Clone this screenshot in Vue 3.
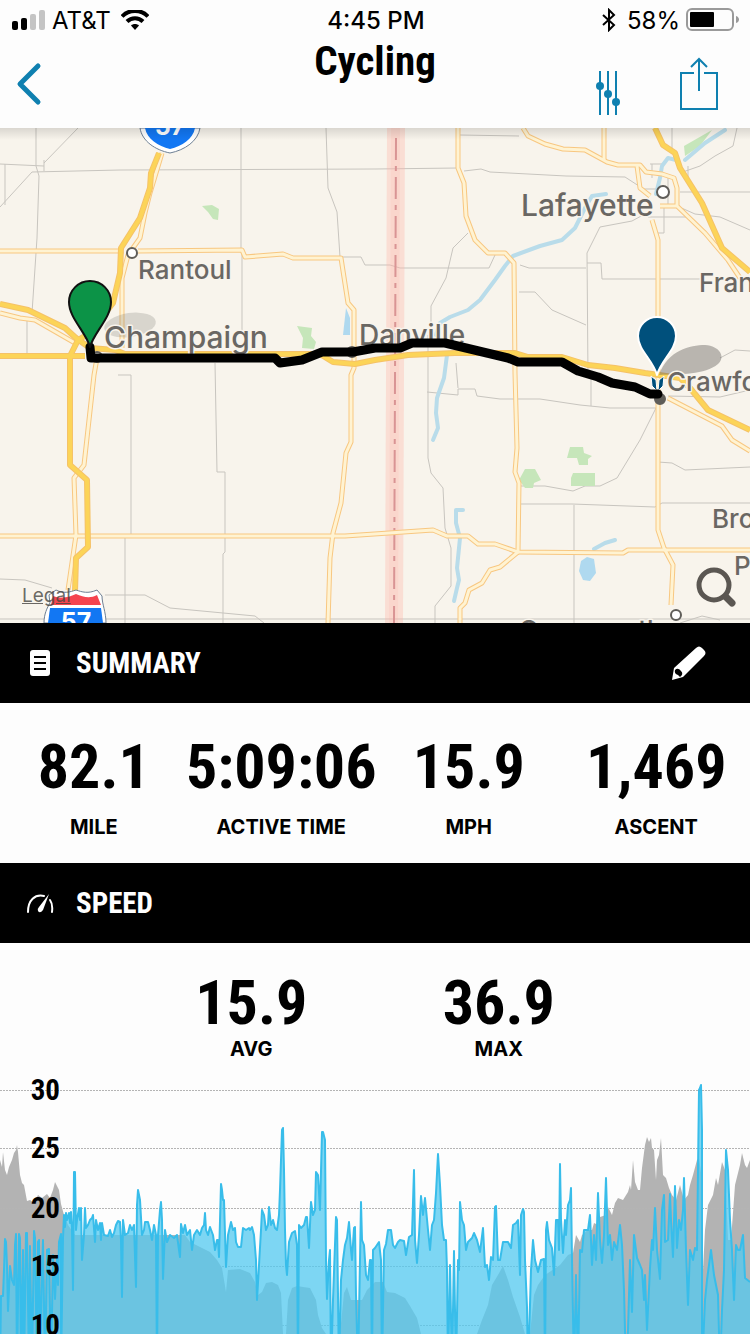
<script setup>
import { computed } from 'vue'

const summary = [
  { value: '82.1', label: 'MILE' },
  { value: '5:09:06', label: 'ACTIVE TIME' },
  { value: '15.9', label: 'MPH' },
  { value: '1,469', label: 'ASCENT' },
]

const speed = [
  { value: '15.9', label: 'AVG' },
  { value: '36.9', label: 'MAX' },
]

// Map geometry
const lanes = [
  'M36 0V38L39 48L37 110L32 185M78 0L44 35M44 32V43M0 36L44 38M5 36V77M0 79L32 44L120 42L375 41L458 40',
  'M241 0V121M242 126V205M326 0L328 60L337 84L340 129H361L365 137H390L400 140H489L495 127M27 192V225',
  'M460 7L519 8M464 43L481 41L490 44L566 48L625 49L642 60M468 105L453 120L446 150L431 178V205',
  'M520 137L529 140H586M519 164H535L552 182L586 197M643 87L632 93L600 99L587 125L588 250M587 135H601L602 151H700',
  'M680 64H750M677 78L695 86L720 89L750 102M737 0L733 18L715 28L700 38L680 45M688 38V50M650 36H664M652 36V50M672 0V20',
  'M648 89H690M664 80V105M656 105H664M644 61H662M668 48V80M428 207V330L431 345L443 360L445 400L451 420V458L435 478V495',
  'M427 264L458 267V261H475L477 268L500 271H540L580 277L610 280H656L640 312L617 350L600 358H585L573 363L545 358H520',
  'M591 247V278M456 235L458 260M520 376H572L655 379L662 375H750M574 377V495M658 334L672 335L685 342L750 339',
  'M668 268L720 269L750 262M720 230L735 222L750 223M131 247V407M118 247H131M215 235L217 344H225V424L223 426V495M125 408V495',
  'M0 451L25 452L52 460M105 467H145L170 480L255 488L264 495M0 491H750M680 495L702 488L720 492',
]

const roads = [
  'M0 123H124M138 123L242 122L245 129L283 126L293 130H341L348 175L354 182L354 240L351 247V314L346 325L341 375L333 405L330 430L328 495',
  'M162 25L150 65L145 85L140 110L128 127L122 150V220M0 185L20 190L35 192L75 215',
  'M97 230L94 247L84 337L74 350L76 407L68 462',
  'M0 408H345L433 402L447 408H468L478 416H495L518 424L623 425L628 422H750',
  'M518 424L500 439L490 442L482 455L469 462L465 475L460 480V495',
  'M458 0V40L464 55L466 88L475 112L488 125H505L514 135L515 245L517 320L515 344L519 355L518 424',
  'M523 0L528 8L545 16L563 21L585 22L607 34L618 37H640L646 44L662 46L674 50L677 60V78L705 105L728 132L740 150M660 78H677',
  'M604 0V33M637 38L640 60L650 68M652 92L658 112V402L664 420L673 437L671 477M668 270L722 298L732 312L750 323',
]

const highways = [
  'M159 25L151 45L150 60L140 90L121 120L120 145L113 175L90 205L78 212L70 228V337L87 352L88 419L76 430L75 464',
  'M0 176L28 182L65 200L76 210L90 220L115 222L125 226H320L333 234L355 236L375 232L408 227L455 225H515L528 229H562L588 237L615 240L645 245L680 250L690 260L708 282L750 302',
  'M0 228H85',
  'M655 0L663 17L675 25L680 40L702 75L722 120L750 144',
]

const rivers = [
  'M606 66L592 68L585 80L575 100L562 112L540 118L513 128L505 138L495 152L480 172L468 182L450 189L440 195L436 207',
  'M447 227L444 250L437 270L436 285L438 300L433 312',
  'M463 382H456V395L460 410L457 440L459 452L457 460L454 473',
  'M725 2L705 15L685 32M676 32L668 30L662 38L660 50L656 66M594 421L605 415L615 412',
]

const route =
  'M90 219L91 230H275L280 235L302 232L322 224L353 224L375 220H400L412 215H445L508 230L518 234H562L578 243L598 249L612 255L635 259L650 266H658'

const places = [
  { name: 'Rantoul', x: 138, y: 151, size: 26 },
  { name: 'Champaign', x: 104, y: 220, size: 30 },
  { name: 'Danville', x: 359, y: 217, size: 28 },
  { name: 'Lafayette', x: 521, y: 88, size: 30 },
  { name: 'Frankfort', x: 699, y: 164, size: 26 },
  { name: 'Crawfordsville', x: 667, y: 263, size: 26 },
  { name: 'Brownsburg', x: 712, y: 400, size: 26 },
  { name: 'Plainfield', x: 734, y: 447, size: 26 },
  { name: 'Greencastle', x: 519, y: 511, size: 26 },
]

// Chart data
const ticks = [
  { value: 30, y: 20 },
  { value: 25, y: 78 },
  { value: 20, y: 138 },
  { value: 15, y: 196 },
  { value: 10, y: 255 },
]

const elevation =
  '0,90 2,97 3,82 5,100 7,105 9,97 12,90 14,83 16,80 17,75 18,82 20,105 22,113 24,115 27,131 30,130 34,133 38,125 42,128 47,124 50,128 53,120 55,112 57,116 59,120 61,134 64,145 68,155 75,165 185,165 190,172 200,177 210,182 217,190 222,198 226,222 228,200 240,199 250,203 255,212 258,225 262,222 266,213 272,212 278,215 281,223 283,264 286,264 288,230 292,218 297,216 303,217 310,218 316,230 318,245 322,258 326,264 340,264 344,223 347,217 351,230 362,230 367,220 375,212 383,212 387,222 395,223 405,228 410,236 417,248 421,264 477,264 482,250 488,235 492,215 498,205 503,196 508,210 513,227 520,247 525,264 530,264 534,225 538,215 545,205 560,195 568,185 573,183 576,165 580,172 582,165 588,160 592,160 594,153 598,155 600,147 606,145 608,137 612,145 615,133 618,128 623,130 628,122 630,115 631,120 633,90 635,112 638,120 640,120 642,98 645,75 647,67 649,72 651,68 652,78 654,80 656,110 657,90 659,85 661,68 663,105 666,108 669,118 672,125 676,130 680,115 684,130 688,125 690,115 693,105 697,90 699,88 702,110 703,200 705,160 708,135 713,125 716,108 718,115 722,92 725,100 728,170 731,170 735,115 740,95 742,83 745,95 747,98 750,90'

const pace =
  '0,300 1,226 3,226 4,200 5,169 6,172 7,196 8,241 10,196 12,210 14,215 15,175 16,164 17,300 19,164 20,168 21,300 23,180 24,300 26,163 27,163 28,230 29,300 30,176 32,300 34,161 35,168 37,300 38,172 39,170 40,300 42,200 43,170 45,300 47,180 49,179 51,300 53,185 55,229 57,187 58,215 59,172 61,164 61,300 63,168 64,145 65,157 66,143 67,150 69,143 70,153 71,142 72,160 73,220 74,102 75,102 76,160 77,150 79,138 80,150 81,138 82,190 84,165 85,138 86,158 88,155 90,150 92,148 93,145 95,172 96,150 98,160 100,153 101,170 102,153 104,165 108,166 110,160 112,167 114,163 116,155 118,151 120,152 121,170 122,227 123,150 125,165 128,163 130,155 132,160 134,155 136,217 137,135 138,120 140,130 142,165 144,160 145,152 148,152 150,160 152,170 154,155 156,165 157,300 158,165 160,140 161,132 162,150 163,209 165,160 167,172 170,165 174,168 177,165 179,180 180,187 181,154 183,163 185,155 187,165 190,160 192,180 194,165 197,160 200,165 202,158 204,155 205,143 206,160 208,165 210,157 213,165 215,180 217,170 218,170 219,187 221,114 222,120 223,130 224,130 226,197 228,165 231,152 233,160 235,158 236,172 238,177 241,177 243,158 246,160 249,158 250,160 252,157 254,165 256,190 257,230 259,195 261,160 262,140 264,145 266,160 268,155 269,137 271,155 273,150 275,158 277,160 279,145 280,120 282,60 283,58 284,100 285,160 286,195 287,205 289,172 292,163 295,161 297,175 298,300 299,155 301,158 304,155 306,147 307,147 309,178 311,132 313,145 315,140 316,102 318,105 320,140 322,62 323,62 325,70 326,190 327,229 329,190 330,180 331,300 333,230 336,147 337,150 339,300 341,210 343,190 345,175 347,168 349,152 351,180 352,190 354,158 355,157 356,225 358,300 360,190 361,132 362,170 364,175 366,205 368,210 370,190 371,190 372,300 373,180 375,178 377,175 379,172 381,190 382,300 384,180 386,174 388,160 391,160 393,175 395,178 398,172 400,170 404,171 406,185 409,167 412,165 414,100 415,170 417,193 419,165 421,126 423,145 425,128 428,160 430,180 432,155 434,150 436,123 438,84 440,115 442,155 444,170 446,170 447,200 448,300 450,195 452,300 454,181 456,300 458,190 459,200 460,132 462,150 464,155 466,180 468,172 472,168 474,163 477,170 480,182 483,158 485,197 487,195 489,210 491,187 493,190 495,137 496,136 498,190 500,190 503,172 508,172 511,178 513,155 516,153 518,150 520,205 521,145 523,139 524,142 525,190 527,237 528,300 530,235 531,200 533,170 535,190 538,202 541,190 544,189 545,300 546,160 547,152 549,170 552,178 554,205 556,150 558,150 559,180 560,94 561,150 563,183 565,150 566,165 568,135 570,130 571,118 572,190 574,300 576,205 578,300 580,180 582,182 584,160 588,160 590,145 592,195 594,165 596,190 598,123 600,170 602,193 604,165 606,108 608,175 610,165 612,190 614,172 617,180 620,155 622,175 624,220 626,300 628,260 630,190 632,242 634,165 637,188 640,195 642,200 644,230 645,205 647,260 650,198 652,170 653,180 655,138 657,180 660,209 662,140 664,125 665,172 668,170 670,124 671,150 673,187 675,116 677,178 679,150 681,160 683,140 684,108 686,180 688,235 690,180 693,190 695,178 697,180 699,20 700,18 701,15 702,60 702,300 705,230 707,210 711,180 714,205 718,225 720,300 722,240 724,200 726,80 728,100 730,150 732,180 734,230 736,175 738,180 740,180 743,165 745,208 750,212'

const elevationArea = computed(() => `0,264 ${elevation} 750,264`)
const paceArea = computed(() => `${pace} 750,300`)
</script>

<template>
  <div class="screen">
    <!-- Status bar -->
    <div class="status-bar">
      <div class="carrier">
        <svg class="signal" viewBox="0 0 34 20" aria-hidden="true">
          <rect x="0" y="11" width="6" height="9" rx="2" />
          <rect x="9" y="8" width="6" height="12" rx="2" />
          <rect class="off" x="18" y="4" width="6" height="16" rx="2" />
          <rect class="off" x="27" y="0" width="6" height="20" rx="2" />
        </svg>
        <span>AT&amp;T</span>
        <svg class="wifi" viewBox="0 0 28 20" aria-hidden="true">
          <path d="M1 6.500C8-1 20-1 27 6.500" />
          <path d="M6 11.500C10.500 7 17.500 7 22 11.500" />
          <path class="dot" d="M10 15.500C12 13.500 16 13.500 18 15.500L14 20Z" />
        </svg>
      </div>
      <span class="clock">4:45 PM</span>
      <div class="power">
        <svg class="bluetooth" viewBox="0 0 16 24" aria-hidden="true">
          <path d="M2 7L13 17L8 22V2L13 7L2 17" />
        </svg>
        <span>58%</span>
        <svg class="battery" viewBox="0 0 54 24" aria-hidden="true">
          <rect class="shell" x="1" y="1" width="46" height="21" rx="5" />
          <rect x="4" y="4" width="24" height="15" rx="1" />
          <path class="cap" d="M50 8C54 9 54 14 50 15Z" />
        </svg>
      </div>
    </div>

    <!-- Navigation -->
    <header class="nav">
      <button class="icon-button back" type="button" aria-label="Back">
        <svg viewBox="0 0 26 44"><path d="M22 4L4 22L22 40" /></svg>
      </button>
      <h1>Cycling</h1>
      <div class="actions">
        <button class="icon-button filters" type="button" aria-label="Adjust">
          <svg viewBox="0 0 26 46">
            <path d="M5 1V45M13 1V45M21 1V45" />
            <circle cx="5" cy="16" r="4" />
            <circle cx="13" cy="24" r="4" />
            <circle cx="21" cy="32" r="4" />
          </svg>
        </button>
        <button class="icon-button share" type="button" aria-label="Share">
          <svg viewBox="0 0 40 54">
            <path d="M15 16H2V52H38V16H25M20 34V2M12 10L20 2L28 10" />
          </svg>
        </button>
      </div>
    </header>

    <!-- Map -->
    <section class="map" aria-label="Route map">
      <svg class="map-canvas" viewBox="0 0 750 495">
        <defs>
          <linearGradient id="edge" x1="0" y1="0" x2="0" y2="1">
            <stop offset="0" stop-color="#000" stop-opacity="0.12" />
            <stop offset="1" stop-color="#000" stop-opacity="0" />
          </linearGradient>
        </defs>

        <path v-for="d in lanes" :key="d" class="lane" :d="d" />

        <g class="park">
          <path d="M202 78L212 77L219 81L218 92L213 91L208 84Z" />
          <path d="M297 198L312 200L311 208L316 214L314 221L302 220L303 210Z" />
          <path d="M570 319L583 319L584 325L592 328L588 331V337H579L577 330H567Z" />
          <path d="M573 345H595V358H571V350Z" />
          <path d="M525 341H535L541 352L534 355L533 360H525L519 352Z" />
          <path d="M684 18L712 2L700 18L685 28Z" />
        </g>

        <path v-for="d in rivers" :key="d" class="river" :d="d" />
        <path class="lake" d="M581 433L587 429L594 431L596 445L590 453L583 452L579 443Z" />
        <path class="lake" d="M346 180L350 190V207H343Z" />

        <path class="border-band" d="M387 0H405L403 495H385Z" />
        <path class="border-halo" d="M391 0H400L398 495H389Z" />
        <path class="border-line" d="M396 10L394 495" />

        <path v-for="d in roads" :key="d" class="road-edge" :d="d" />
        <path v-for="d in roads" :key="d" class="road" :d="d" />
        <path v-for="d in highways" :key="d" class="highway-edge" :d="d" />
        <path v-for="d in highways" :key="d" class="highway" :d="d" />

        <!-- Interstate shields -->
        <g class="shield">
          <path class="plate" d="M140 0C142 13 155 22 170 25C185 22 198 13 200 0Z" />
          <path class="blue" d="M145 0C147 11 158 18 170 21C182 18 193 11 195 0Z" />
          <text x="170" y="7" text-anchor="middle">57</text>
          <path class="plate" d="M44 495C44 486 47 480 50 475L49 467L56 462C64 466 70 464 76 462C82 464 88 466 97 462L102 468C102 476 106 484 106 495Z" />
          <path class="red" d="M53 468C62 471 70 469 76 466C83 469 90 471 97 467L101 477H51Z" />
          <path class="blue" d="M50 480H101L103 495H48Z" />
          <text x="76" y="503" text-anchor="middle">57</text>
        </g>

        <ellipse class="shadow light" cx="130" cy="197" rx="26" ry="12" transform="rotate(-8 130 197)" />
        <path class="shadow" d="M659 247C668 222 690 217 705 217C720 218 726 229 718 236C705 247 680 246 659 247Z" />

        <g class="town">
          <circle cx="132" cy="125" r="5" />
          <circle cx="97" cy="229" r="5" />
          <circle cx="352" cy="224" r="5" />
          <circle cx="663" cy="64" r="6" />
          <circle class="end" cx="660" cy="271" r="5" />
          <circle cx="676" cy="487" r="5" />
        </g>
        <text
          v-for="place in places"
          :key="place.name"
          class="place"
          :x="place.x"
          :y="place.y"
          :font-size="place.size"
        >{{ place.name }}</text>

        <path class="dart" d="M651 248L656 252L657 263L652 258ZM664 248L659 252L658 263L663 258Z" />
        <path class="route" :d="route" />
        <path class="pin start" d="M90 219C86 204 69 190 69 174A21 21 0 0 1 111 174C111 190 94 204 90 219Z" />
        <path class="pin finish" d="M657 247C653 232 638 222 638 208A19 19 0 0 1 676 208C676 222 661 232 657 247Z" />

        <rect width="750" height="12" fill="url(#edge)" />
      </svg>
      <a class="legal" href="#">Legal</a>
      <button class="icon-button search" type="button" aria-label="Search map">
        <svg viewBox="0 0 42 42">
          <circle cx="19" cy="19" r="15" />
          <path class="handle" d="M31 31L37 37" />
        </svg>
      </button>
    </section>

    <!-- Summary -->
    <section>
      <div class="bar">
        <svg class="bar-icon" viewBox="0 0 28 28" aria-hidden="true">
          <rect x="4" y="1" width="20" height="26" rx="3" />
          <path class="cut" d="M8 8H20M8 14H20M8 20H20" />
        </svg>
        <h2>SUMMARY</h2>
        <button class="icon-button edit" type="button" aria-label="Edit summary">
          <svg viewBox="0 0 36 36">
            <path d="M3 23L25 3Q28 0 31 3L33 5Q36 8 33 11L12 32L1 35Z" />
            <path class="nib" d="M4 25Q7 22 10 26Q13 29 9 32L7 30Q3 29 4 25Z" />
          </svg>
        </button>
      </div>
      <div class="stats summary">
        <div v-for="item in summary" :key="item.label" class="stat">
          <span class="value">{{ item.value }}</span>
          <span class="label">{{ item.label }}</span>
        </div>
      </div>
    </section>

    <!-- Speed -->
    <section>
      <div class="bar">
        <svg class="bar-icon" viewBox="0 0 28 28" aria-hidden="true">
          <path class="dial" d="M2 23C2 11 9 5 18 7M24 11Q27 15 26 23" />
          <path d="M23 5L17 21Q14 25 12 22Q11 20 13 18Z" />
        </svg>
        <h2>SPEED</h2>
      </div>
      <div class="stats speed">
        <div v-for="item in speed" :key="item.label" class="stat">
          <span class="value">{{ item.value }}</span>
          <span class="label">{{ item.label }}</span>
        </div>
      </div>
      <svg class="chart" viewBox="0 0 750 264" role="img" aria-label="Speed over elevation">
        <polygon class="elevation" :points="elevationArea" />
        <path v-for="tick in ticks" :key="tick.value" class="grid-line" :d="`M0 ${tick.y}.5H750`" />
        <polygon class="pace-area" :points="paceArea" />
        <polyline class="pace-line" :points="pace" />
        <text
          v-for="tick in ticks"
          :key="tick.value"
          class="tick"
          x="60"
          :y="tick.y + 10"
          text-anchor="end"
        >{{ tick.value }}</text>
      </svg>
    </section>
  </div>
</template>

<style>
body {
  background: #fdfdfd;
}
</style>

<style scoped>
.screen {
  overflow: hidden;
  background: #fdfdfd;
  color: #000;
  font-family: Inter, "Liberation Sans", sans-serif;
}

svg {
  display: block;
}

/* Status bar */
.status-bar {
  display: grid;
  grid-template-columns: 1fr auto 1fr;
  align-items: center;
  height: 40px;
  padding: 0 10px 0 12px;
  font-size: 24px;
}

.carrier,
.power {
  display: flex;
  align-items: center;
  gap: 6px;
}

.power {
  justify-content: flex-end;
}

.clock {
  font-weight: 500;
}

.signal {
  width: 34px;
  height: 20px;
}

.signal .off {
  fill: #c4c4c4;
}

.wifi {
  width: 28px;
  height: 20px;
  margin-left: 4px;
  fill: none;
  stroke: #000;
  stroke-width: 4;
}

.wifi .dot {
  fill: #000;
  stroke: none;
}

.bluetooth {
  width: 16px;
  height: 24px;
  margin-right: 4px;
  fill: none;
  stroke: #000;
  stroke-width: 2;
}

.battery {
  width: 54px;
  height: 24px;
}

.battery .shell {
  fill: none;
  stroke: #9a9a9a;
  stroke-width: 2;
}

.battery .cap {
  fill: #9a9a9a;
}

/* Navigation */
.nav {
  display: grid;
  grid-template-columns: 1fr auto 1fr;
  height: 88px;
  padding: 0 16px;
}

.icon-button {
  padding: 0;
  border: 0;
  background: none;
  cursor: pointer;
}

.nav svg {
  fill: none;
  stroke: #0f80b0;
}

.back {
  align-self: center;
  justify-self: start;
}

.back svg {
  width: 26px;
  height: 44px;
  stroke-width: 5;
  stroke-linecap: round;
  stroke-linejoin: round;
}

h1,
h2 {
  margin: 0;
  font-family: "Roboto Condensed", "Liberation Sans Narrow", Roboto, sans-serif;
  font-weight: 700;
}

h1 {
  font-size: 41px;
  line-height: 42px;
}

.actions {
  display: flex;
  align-items: center;
  justify-content: flex-end;
  gap: 58px;
  padding-right: 15px;
}

.filters svg {
  width: 26px;
  height: 46px;
  margin-top: 18px;
  stroke-width: 2;
}

.filters circle {
  fill: #0f80b0;
  stroke: none;
}

.share svg {
  width: 40px;
  height: 54px;
  stroke-width: 2;
}

/* Map */
.map {
  position: relative;
  background: #f8f4ec;
}

.map-canvas {
  width: 100%;
  height: auto;
  fill: none;
  stroke-linejoin: round;
}

.lane {
  stroke: #c8c5bf;
  stroke-width: 1;
}

.road-edge {
  stroke: #f8c780;
  stroke-width: 5;
}

.road {
  stroke: #fff3d2;
  stroke-width: 3;
}

.highway-edge {
  stroke: #f5c268;
  stroke-width: 6;
}

.highway {
  stroke: #fcd458;
  stroke-width: 4;
}

.river {
  stroke: #b9dcea;
  stroke-width: 4;
  stroke-linecap: round;
}

.lake {
  fill: #afd9ef;
}

.park {
  fill: #c6e6ba;
}

.border-band {
  fill: rgba(255, 180, 170, 0.35);
}

.border-halo {
  fill: rgba(255, 170, 160, 0.15);
}

.border-line {
  stroke: #d99494;
  stroke-width: 2;
  stroke-dasharray: 22 6 5 6;
}

.shield .plate {
  fill: #fff;
  stroke: #6d7f93;
  stroke-width: 1;
}

.shield .blue {
  fill: #1277f3;
}

.shield .red {
  fill: #f5444f;
}

.shield text {
  fill: #fff;
  font-size: 25px;
  font-weight: 700;
}

.shadow {
  fill: rgba(90, 88, 84, 0.4);
}

.shadow.light {
  fill: rgba(90, 88, 84, 0.2);
}

.town {
  fill: #fff;
  stroke: #5f5d59;
  stroke-width: 2;
}

.town .end {
  fill: #5f5d59;
}

.place {
  fill: #6a6763;
  stroke: #f8f4ec;
  stroke-width: 3;
  paint-order: stroke;
  font-weight: 500;
}

.route {
  stroke: #000;
  stroke-width: 9;
  stroke-linecap: round;
}

.pin {
  stroke-width: 2;
}

.pin.start {
  fill: #0c9347;
  stroke: #111;
}

.pin.finish {
  fill: #00507c;
  stroke: #fff;
}

.dart {
  fill: #00507c;
  stroke: #fff;
  stroke-width: 1;
}

.legal {
  position: absolute;
  bottom: 16px;
  left: 22px;
  color: rgba(70, 68, 64, 0.8);
  font-size: 19px;
  line-height: 22px;
}

.search {
  position: absolute;
  right: 13px;
  bottom: 15px;
}

.search svg {
  width: 42px;
  height: 42px;
  fill: none;
  stroke: #5b5752;
  stroke-width: 5;
  stroke-linecap: round;
}

.search .handle {
  stroke-width: 7;
}

/* Section bars */
.bar {
  display: flex;
  align-items: center;
  gap: 22px;
  height: 80px;
  padding: 0 43px 0 26px;
  background: #000;
  color: #fff;
}

.bar h2 {
  font-size: 29px;
  line-height: 40px;
}

.bar-icon {
  width: 28px;
  height: 28px;
  fill: #fff;
}

.bar-icon .cut {
  stroke: #000;
  stroke-width: 2;
}

.bar-icon .dial {
  fill: none;
  stroke: #fff;
  stroke-width: 2;
  stroke-linecap: round;
}

.edit {
  margin-left: auto;
}

.edit svg {
  width: 36px;
  height: 36px;
  fill: #fff;
}

.edit .nib {
  fill: #000;
}

/* Stats */
.stats {
  display: grid;
}

.stats.summary {
  grid-template-columns: repeat(4, minmax(0, 1fr));
  height: 160px;
  padding-top: 32px;
  box-sizing: border-box;
}

.stats.speed {
  grid-template-columns: repeat(2, 33%);
  justify-content: center;
  height: 127px;
  padding-top: 28px;
  box-sizing: border-box;
}

.stat {
  display: flex;
  flex-direction: column;
  align-items: center;
  gap: 16px;
}

.speed .stat {
  gap: 2px;
}

.value {
  font-family: "Liberation Sans Narrow", "Roboto Condensed", Roboto, sans-serif;
  font-size: 62px;
  font-weight: 700;
  line-height: 64px;
}

.label {
  font-size: 20px;
  font-weight: 700;
  line-height: 24px;
}

/* Chart */
.chart {
  width: 100%;
  height: auto;
}

.elevation {
  fill: #b3b3b3;
}

.grid-line {
  stroke: #b4b4b4;
  stroke-width: 1;
  stroke-dasharray: 2 1;
}

.pace-area {
  fill: rgba(84, 201, 239, 0.76);
}

.pace-line {
  fill: none;
  stroke: #38bdea;
  stroke-width: 2;
  stroke-linejoin: round;
}

.tick {
  font-family: "Liberation Sans Narrow", "Roboto Condensed", Roboto, sans-serif;
  font-size: 29px;
  font-weight: 700;
}
</style>
